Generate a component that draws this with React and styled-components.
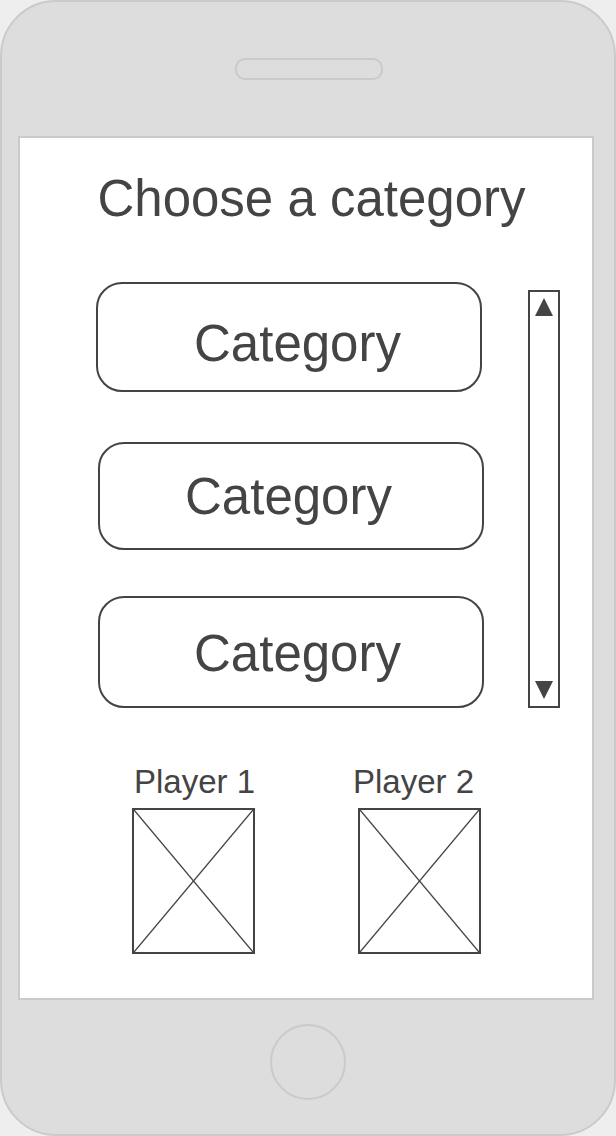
import React from 'react'
import styled, { createGlobalStyle } from 'styled-components'

const GlobalStyle = createGlobalStyle`
  html, body {
    margin: 0;
    padding: 0;
    background: #eeeeee;
  }
  * {
    box-sizing: border-box;
  }
`;

const categories = [
  { id: 1, height: 110, gap: 0, dx: 0, shift: 17, drop: 12 },
  { id: 2, height: 108, gap: 50, dx: 2, shift: -5, drop: 0 },
  { id: 3, height: 112, gap: 46, dx: 2, shift: 13, drop: 2 },
];

const players = [
  { name: 'Player 1', labelShift: 1 },
  { name: 'Player 2', labelShift: -6 },
];

function Arrow({ down }) {
  return (
    <svg width="18" height="19" viewBox="0 0 18 19">
      {down ? (
        <polygon points="0,0 18,0 9,18" fill="#444" />
      ) : (
        <polygon points="9,1 18,19 0,19" fill="#444" />
      )}
    </svg>
  );
}

function Placeholder() {
  return (
    <PictureBox>
      <svg width="100%" height="100%" viewBox="0 0 100 100" preserveAspectRatio="none">
        <line x1="0" y1="0" x2="100" y2="100" stroke="#444" strokeWidth="1.4" vectorEffect="non-scaling-stroke" />
        <line x1="100" y1="0" x2="0" y2="100" stroke="#444" strokeWidth="1.4" vectorEffect="non-scaling-stroke" />
      </svg>
    </PictureBox>
  );
}

export default function App() {
  return (
    <>
      <GlobalStyle />
      <Phone>
        <TopBar>
          <Speaker />
        </TopBar>
        <Screen>
          <Title>Choose a category</Title>
          <MainRow>
            <ButtonList>
              {categories.map((c) => (
                <CategoryButton key={c.id} $h={c.height} $gap={c.gap} $dx={c.dx} $shift={c.shift} $drop={c.drop}>
                  Category
                </CategoryButton>
              ))}
            </ButtonList>
            <Scrollbar>
              <Arrow />
              <Arrow down />
            </Scrollbar>
          </MainRow>
          <PlayersRow>
            {players.map((p) => (
              <PlayerCard key={p.name}>
                <PlayerLabel $shift={p.labelShift}>{p.name}</PlayerLabel>
                <Placeholder />
              </PlayerCard>
            ))}
          </PlayersRow>
        </Screen>
        <BottomBar>
          <HomeButton />
        </BottomBar>
      </Phone>
    </>
  );
}

const Phone = styled.div`
  width: 616px;
  height: 1136px;
  border: 2px solid #cacaca;
  border-radius: 56px;
  background: #dddddd;
  display: flex;
  flex-direction: column;
  overflow: hidden;
`;

const TopBar = styled.div`
  height: 134px;
  display: flex;
  align-items: center;
  justify-content: center;
  padding-left: 2px;
`;

const Speaker = styled.div`
  width: 148px;
  height: 22px;
  border: 2px solid #cacaca;
  border-radius: 10px;
`;

const Screen = styled.div`
  height: 864px;
  margin: 0 20px 0 16px;
  border: 2px solid #cacaca;
  background: #ffffff;
  padding-top: 31px;
  font-family: "Liberation Sans", Arial, sans-serif;
  color: #444444;
`;

const Title = styled.h1`
  margin: 0;
  padding-left: 11px;
  font-size: 51px;
  font-weight: normal;
  line-height: 60px;
  text-align: center;
`;

const MainRow = styled.div`
  display: flex;
  margin-top: 53px;
  padding-left: 76px;
`;

const ButtonList = styled.div`
  width: 388px;
  display: flex;
  flex-direction: column;
`;

const CategoryButton = styled.div`
  width: 386px;
  height: ${(p) => p.$h}px;
  margin-top: ${(p) => p.$gap}px;
  margin-left: ${(p) => p.$dx}px;
  border: 2px solid #444444;
  border-radius: 26px;
  display: flex;
  align-items: center;
  justify-content: center;
  padding-left: ${(p) => Math.max(p.$shift, 0)}px;
  padding-right: ${(p) => Math.max(-p.$shift, 0)}px;
  padding-top: ${(p) => p.$drop}px;
  font-size: 51px;
  line-height: 1;
`;

const Scrollbar = styled.div`
  width: 32px;
  height: 418px;
  margin-left: 44px;
  margin-top: 8px;
  border: 2px solid #444444;
  display: flex;
  flex-direction: column;
  align-items: center;
  justify-content: space-between;
  padding: 5px 0 6px;
`;

const PlayersRow = styled.div`
  display: grid;
  grid-template-columns: 123px 123px;
  column-gap: 103px;
  margin-top: 56px;
  padding-left: 112px;
`;

const PlayerCard = styled.div`
  display: flex;
  flex-direction: column;
  gap: 8px;
`;

const PlayerLabel = styled.div`
  margin: 0 -30px;
  padding-left: ${(p) => Math.max(p.$shift * 2, 0)}px;
  padding-right: ${(p) => Math.max(-p.$shift * 2, 0)}px;
  font-size: 33px;
  line-height: 36px;
  text-align: center;
  white-space: nowrap;
`;

const PictureBox = styled.div`
  width: 123px;
  height: 146px;
  border: 2px solid #444444;
  svg {
    display: block;
  }
`;

const BottomBar = styled.div`
  flex: 1;
  display: flex;
  justify-content: center;
  padding-top: 24px;
`;

const HomeButton = styled.div`
  width: 76px;
  height: 76px;
  border: 2px solid #cacaca;
  border-radius: 50%;
`;
